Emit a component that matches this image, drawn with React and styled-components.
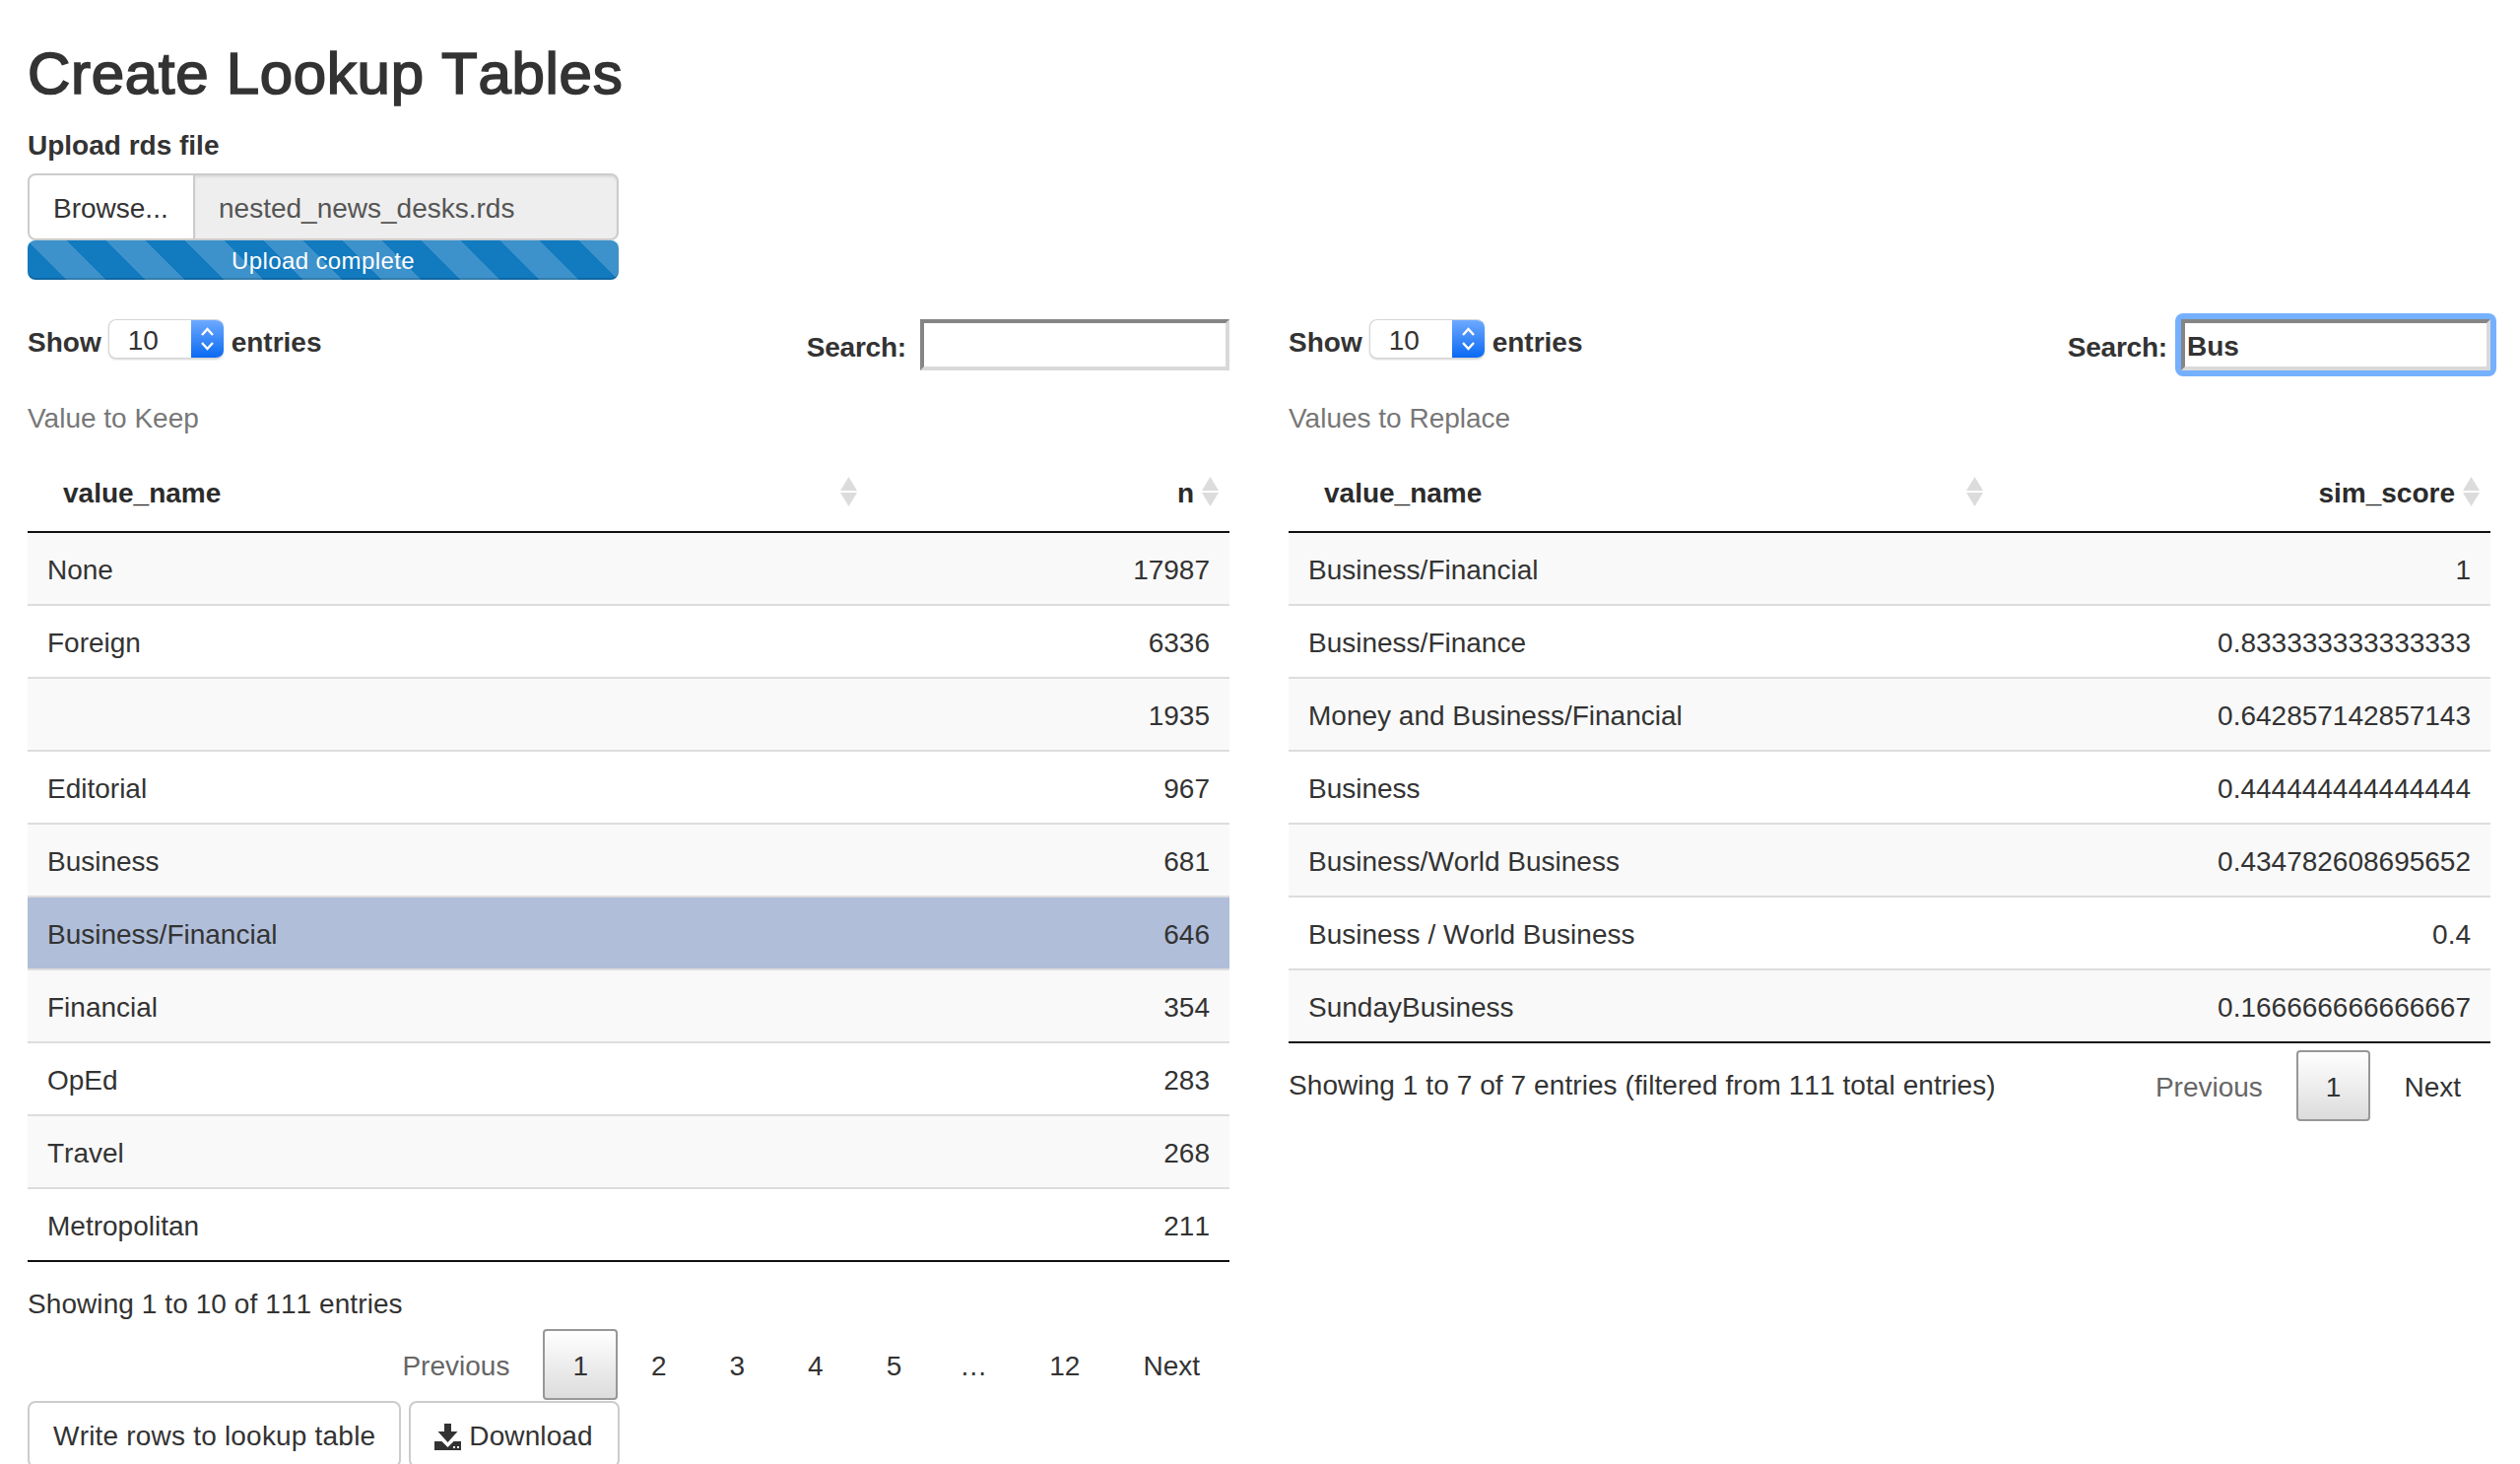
import React from 'react';
import styled, { createGlobalStyle } from 'styled-components';

const Global = createGlobalStyle`
  html, body { margin: 0; padding: 0; height: 100%; overflow: hidden; background: #fff; }
  body { font-family: "Liberation Sans", Arial, sans-serif; font-size: 28px; line-height: 40px; color: #333; font-kerning: none; }
  * { box-sizing: border-box; }
`;

const Page = styled.div`
  padding: 42px 30px 0 28px;
`;
const Title = styled.h2`
  margin: 0;
  font-size: 60px;
  line-height: 66px;
  font-weight: 400;
  -webkit-text-stroke: 1.7px #333;
  letter-spacing: 0.7px;
  color: #333;
`;
const FileBlock = styled.div`
  width: 600px;
  margin-top: 20px;
`;
const FieldLabel = styled.label`
  display: block;
  font-weight: 700;
  margin-bottom: 8px;
`;
const InputGroup = styled.div`
  display: flex;
  height: 68px;
`;
const BrowseButton = styled.span`
  width: 170px;
  background: #fff;
  border: 2px solid #ccc;
  border-radius: 8px 0 0 8px;
  padding: 14px 24px 10px;
  white-space: nowrap;
`;
const FileName = styled.div`
  flex: 1;
  background: #eee;
  border: 2px solid #ccc;
  border-left: 0;
  border-radius: 0 8px 8px 0;
  padding: 14px 24px 10px;
  color: #555;
  box-shadow: inset 0 2px 2px rgba(0, 0, 0, 0.075);
`;
const Progress = styled.div`
  height: 40px;
  padding-top: 1px;
  border-radius: 8px;
  background-color: #127abf;
  background-image: linear-gradient(
    45deg,
    rgba(255, 255, 255, 0.18) 25%,
    transparent 25%,
    transparent 50%,
    rgba(255, 255, 255, 0.18) 50%,
    rgba(255, 255, 255, 0.18) 75%,
    transparent 75%,
    transparent
  );
  background-size: 80px 80px;
  box-shadow: inset 0 -2px 0 rgba(0, 0, 0, 0.15);
  color: #fff;
  font-size: 24px;
  letter-spacing: 0.4px;
  text-align: center;
`;
const Columns = styled.div`
  display: grid;
  grid-template-columns: 1220px 1220px;
  column-gap: 60px;
  margin-top: 40px;
`;
const Toolbar = styled.div`
  display: flex;
  justify-content: space-between;
  align-items: flex-start;
  height: 52px;
`;
const LengthControl = styled.div`
  display: flex;
  align-items: flex-start;
  font-weight: 700;
`;
const LengthText = styled.span`
  margin-top: 4px;
`;
const SelectBox = styled.div`
  display: flex;
  width: 117px;
  height: 40px;
  margin: 0 8px 0 7px;
  background: #fff;
  border: 1px solid #d5d5d5;
  border-right: 0;
  border-radius: 8px;
  box-shadow: 0 1px 2px rgba(0, 0, 0, 0.18);
  font-weight: 400;
  overflow: hidden;
`;
const SelectValue = styled.span`
  flex: 1;
  padding: 2px 0 0 19px;
  line-height: 38px;
`;
const Stepper = styled.span`
  display: flex;
  align-items: center;
  justify-content: center;
  width: 33px;
  background: linear-gradient(#6daaff, #0b69f3);
`;
const SearchControl = styled.label`
  display: flex;
  align-items: flex-start;
  gap: 14px;
  font-weight: 700;
`;
const SearchText = styled.span`
  margin-top: 9px;
  letter-spacing: -0.2px;
`;
const FocusRing = styled.span`
  display: block;
  margin: ${(p) => (p.$focused ? '-6px -6px -6px -6px' : '0')};
  padding: ${(p) => (p.$focused ? '6px' : '0')};
  background: ${(p) => (p.$focused ? '#75b0ff' : 'transparent')};
  border-radius: 8px;
`;
const SearchInput = styled.input`
  display: block;
  width: 314px;
  height: 52px;
  padding: 4px 2px 0;
  border-width: 4px;
  border-style: solid;
  border-color: #858585 #d9d9d9 #d9d9d9 #858585;
  background: #fff;
  color: #333;
  font: 700 28px/40px "Liberation Sans", Arial, sans-serif;
  font-kerning: none;
  outline: none;
`;
const Table = styled.table`
  width: 100%;
  table-layout: fixed;
  border-collapse: separate;
  border-spacing: 0;
  border-bottom: 2px solid #111;
`;
const Caption = styled.caption`
  caption-side: top;
  text-align: left;
  padding: 29px 0 14px;
  color: #777;
  font-kerning: normal;
`;
const ColSpec = styled.col`
  width: ${(p) => p.$w}px;
`;
const Th = styled.th`
  position: relative;
  padding: 22px 36px 18px;
  border-bottom: 2px solid #111;
  text-align: ${(p) => (p.$num ? 'right' : 'left')};
  font-weight: 700;
  color: #2b2b2b;
`;
const SortIcon = styled.svg`
  position: absolute;
  top: 25px;
  right: 11px;
  width: 17px;
  height: 30px;
`;
const Row = styled.tr`
  background: ${(p) => (p.$selected ? '#b0bed9' : p.$odd ? '#f9f9f9' : '#fff')};
`;
const Td = styled.td`
  padding: 18px 20px 14px;
  height: ${(p) => (p.$first ? 72 : 74)}px;
  border-top: ${(p) => (p.$first ? '0' : '2px solid #ddd')};
  text-align: ${(p) => (p.$num ? 'right' : 'left')};
  white-space: nowrap;
`;
const Footer = styled.div`
  display: flex;
  flex-direction: ${(p) => (p.$stacked ? 'column' : 'row')};
  justify-content: space-between;
  align-items: ${(p) => (p.$stacked ? 'stretch' : 'flex-start')};
`;
const Info = styled.div`
  padding-top: 23px;
  letter-spacing: 0.08px;
  white-space: nowrap;
`;
const Pager = styled.div`
  display: flex;
  justify-content: flex-end;
  margin-top: ${(p) => (p.$stacked ? 5 : 7)}px;
`;
const PageButton = styled.span`
  margin-left: 4px;
  padding: 16px 28px 12px;
  border: 2px solid ${(p) => (p.$current ? '#979797' : 'transparent')};
  border-radius: 4px;
  background: ${(p) => (p.$current ? 'linear-gradient(#fff, #dcdcdc)' : 'transparent')};
  color: ${(p) => (p.$disabled ? '#666' : '#333')};
`;
const Ellipsis = styled.span`
  padding: 18px 29px 14px;
  color: #333;
`;
const Actions = styled.div`
  display: flex;
  gap: 8px;
  margin-top: 1px;
`;
const Button = styled.button`
  display: flex;
  align-items: center;
  gap: 8px;
  height: 68px;
  padding: 4px 24px 0;
  background: #fff;
  border: 2px solid #ccc;
  border-radius: 8px;
  color: #333;
  font: 400 28px/40px "Liberation Sans", Arial, sans-serif;
  font-kerning: none;
  letter-spacing: 0.2px;
`;
const DownloadButton = styled(Button)`
  width: 214px;
  letter-spacing: 0.1px;
`;

const Chevrons = () => (
  <svg width="17" height="30" viewBox="0 0 17 30" fill="none" stroke="#fff" strokeWidth="2.4">
    <path d="M3 11 L8.5 5 L14 11" />
    <path d="M3 19 L8.5 25 L14 19" />
  </svg>
);
const Sort = () => (
  <SortIcon viewBox="0 0 17 30">
    <path d="M8.5 0 L17 14 H0 Z" fill="#dcdcdc" />
    <path d="M0 16 H17 L8.5 30 Z" fill="#dcdcdc" />
  </SortIcon>
);
const DownloadIcon = () => (
  <svg width="27" height="27" viewBox="0 0 27 27">
    <path d="M10 0 H17 V8 H23.5 L13.5 19 L3.5 8 H10 Z" fill="#333" />
    <path d="M0 27 V18 H7.5 L13.5 24 L19.5 18 H27 V27 Z" fill="#333" />
    <rect x="19" y="23" width="2" height="2" fill="#fff" />
    <rect x="23" y="23" width="2" height="2" fill="#fff" />
  </svg>
);

const LengthMenu = () => (
  <LengthControl>
    <LengthText>Show</LengthText>
    <SelectBox>
      <SelectValue>10</SelectValue>
      <Stepper><Chevrons /></Stepper>
    </SelectBox>
    <LengthText>entries</LengthText>
  </LengthControl>
);

const SearchBox = ({ value, focused }) => (
  <SearchControl>
    <SearchText>Search:</SearchText>
    <FocusRing $focused={focused}>
      <SearchInput value={value} readOnly />
    </FocusRing>
  </SearchControl>
);

const DataTable = ({ caption, widths, numHeader, rows, selected }) => (
  <Table>
    <Caption>{caption}</Caption>
    <colgroup>
      <ColSpec $w={widths[0]} />
      <ColSpec $w={widths[1]} />
    </colgroup>
    <thead>
      <tr>
        <Th>value_name<Sort /></Th>
        <Th $num>{numHeader}<Sort /></Th>
      </tr>
    </thead>
    <tbody>
      {rows.map(([name, num], i) => (
        <Row key={i} $odd={i % 2 === 0} $selected={i === selected}>
          <Td $first={i === 0}>{name}</Td>
          <Td $first={i === 0} $num>{num}</Td>
        </Row>
      ))}
    </tbody>
  </Table>
);

const keepRows = [
  ['None', '17987'],
  ['Foreign', '6336'],
  ['', '1935'],
  ['Editorial', '967'],
  ['Business', '681'],
  ['Business/Financial', '646'],
  ['Financial', '354'],
  ['OpEd', '283'],
  ['Travel', '268'],
  ['Metropolitan', '211'],
];
const replaceRows = [
  ['Business/Financial', '1'],
  ['Business/Finance', '0.833333333333333'],
  ['Money and Business/Financial', '0.642857142857143'],
  ['Business', '0.444444444444444'],
  ['Business/World Business', '0.434782608695652'],
  ['Business / World Business', '0.4'],
  ['SundayBusiness', '0.166666666666667'],
];

export default function App() {
  return (
    <Page>
      <Global />
      <Title>Create Lookup Tables</Title>
      <FileBlock>
        <FieldLabel>Upload rds file</FieldLabel>
        <InputGroup>
          <BrowseButton>Browse...</BrowseButton>
          <FileName>nested_news_desks.rds</FileName>
        </InputGroup>
        <Progress>Upload complete</Progress>
      </FileBlock>
      <Columns>
        <section>
          <Toolbar>
            <LengthMenu />
            <SearchBox value="" />
          </Toolbar>
          <DataTable caption="Value to Keep" widths={[853, 367]} numHeader="n" rows={keepRows} selected={5} />
          <Footer $stacked>
            <Info>Showing 1 to 10 of 111 entries</Info>
            <Pager $stacked>
              <PageButton $disabled>Previous</PageButton>
              <PageButton $current>1</PageButton>
              <PageButton>2</PageButton>
              <PageButton>3</PageButton>
              <PageButton>4</PageButton>
              <PageButton>5</PageButton>
              <Ellipsis>…</Ellipsis>
              <PageButton>12</PageButton>
              <PageButton>Next</PageButton>
            </Pager>
          </Footer>
          <Actions>
            <Button>Write rows to lookup table</Button>
            <DownloadButton><DownloadIcon />Download</DownloadButton>
          </Actions>
        </section>
        <section>
          <Toolbar>
            <LengthMenu />
            <SearchBox value="Bus" focused />
          </Toolbar>
          <DataTable caption="Values to Replace" widths={[716, 504]} numHeader="sim_score" rows={replaceRows} />
          <Footer>
            <Info>Showing 1 to 7 of 7 entries (filtered from 111 total entries)</Info>
            <Pager>
              <PageButton $disabled>Previous</PageButton>
              <PageButton $current>1</PageButton>
              <PageButton>Next</PageButton>
            </Pager>
          </Footer>
        </section>
      </Columns>
    </Page>
  );
}
